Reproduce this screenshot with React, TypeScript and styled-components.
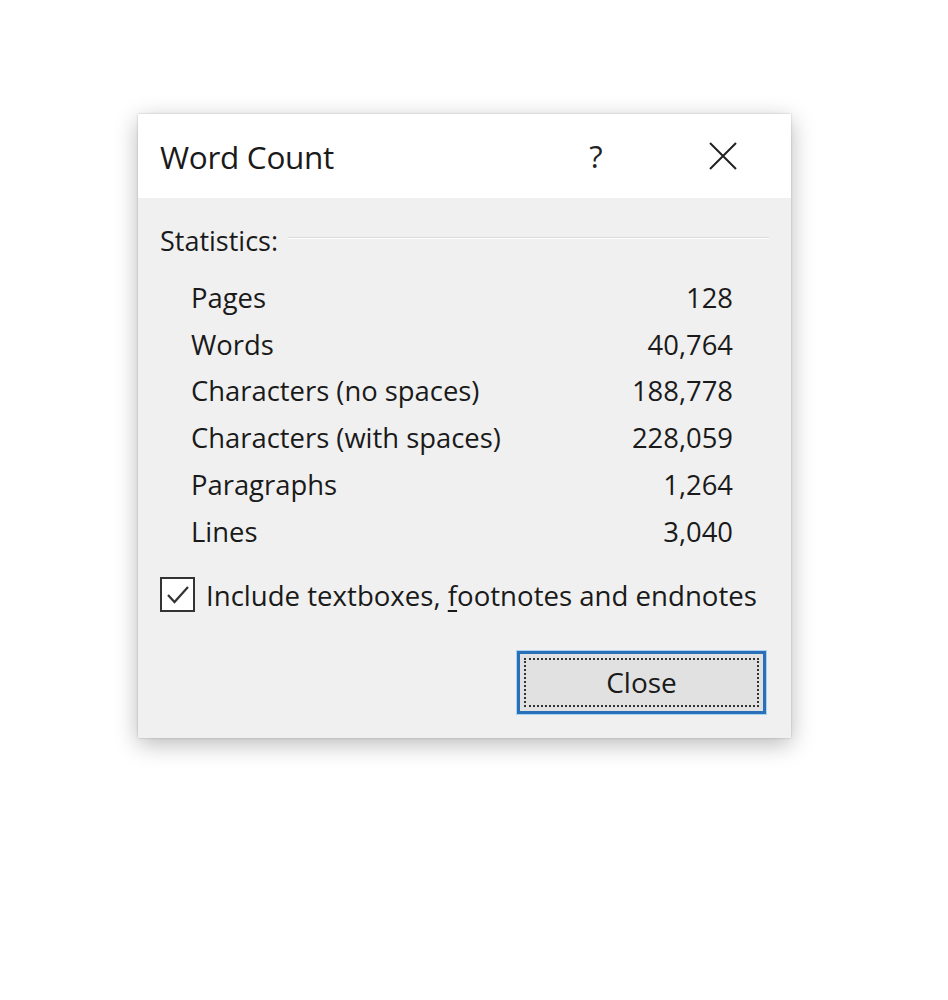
import React from "react";
import styled, { createGlobalStyle } from "styled-components";

const Global = createGlobalStyle`
  html, body { margin: 0; padding: 0; background: #ffffff; }
  body { font-family: "Open Sans", "Noto Sans", sans-serif; color: #1a1a1a; }
`;

const Page = styled.div`
  width: 948px;
  height: 1000px;
  padding: 114px 0 0 138px;
  box-sizing: border-box;
`;

const Dialog = styled.div`
  width: 653px;
  height: 624px;
  background: #f0f0f0;
  box-shadow: 0 6px 22px rgba(0, 0, 0, 0.28), 0 0 2px rgba(0, 0, 0, 0.2);
  display: flex;
  flex-direction: column;
`;

const TitleBar = styled.div`
  height: 84px;
  background: #ffffff;
  display: flex;
  align-items: center;
  padding-left: 22px;
`;

const Title = styled.div`
  flex: 1;
  font-size: 31.5px;
  color: #1a1a1a;
  letter-spacing: -0.3px;
`;

const TitleButton = styled.div<{ $gap?: number }>`
  width: 64px;
  height: 40px;
  display: flex;
  align-items: center;
  justify-content: center;
  font-size: 31px;
  color: #222;
  margin-right: ${(p) => p.$gap ?? 0}px;
`;

const Body = styled.div`
  padding: 24px 22px 0 22px;
  display: flex;
  flex-direction: column;
`;

const GroupHeader = styled.div`
  display: flex;
  align-items: center;
  gap: 10px;
  font-size: 27px;
  height: 36px;
`;

const GroupLine = styled.div`
  flex: 1;
  height: 1px;
  background: #dcdcdc;
  border-bottom: 1px solid #ffffff;
  margin-top: -4px;
`;

const Stats = styled.div`
  display: flex;
  flex-direction: column;
  padding: 16px 36px 0 31px;
`;

const StatRow = styled.div`
  display: flex;
  justify-content: space-between;
  align-items: center;
  height: 46.8px;
  font-size: 27.4px;
`;

const CheckRow = styled.div`
  display: flex;
  align-items: center;
  gap: 11px;
  margin-top: 21px;
  font-size: 27.6px;
`;

const Box = styled.div`
  width: 31px;
  height: 31px;
  border: 2px solid #333;
  background: #fff;
  display: flex;
  align-items: center;
  justify-content: center;
`;

const Underline = styled.span`
  text-decoration: underline;
  text-underline-offset: 4px;
`;

const Footer = styled.div`
  display: flex;
  justify-content: flex-end;
  padding: 37px 3px 0 0;
`;

const Button = styled.button`
  width: 249px;
  height: 63px;
  background: #e1e1e1;
  border: 3px solid #2a70b8;
  box-shadow: 0 0 0 1px #a9d2f3;
  padding: 4px;
  font-family: inherit;
  font-size: 28px;
  color: #1a1a1a;
  box-sizing: border-box;
  display: flex;
`;

const FocusRect = styled.span`
  flex: 1;
  border: 2px dotted #333;
  display: flex;
  align-items: center;
  justify-content: center;
`;

const stats: [string, string][] = [
  ["Pages", "128"],
  ["Words", "40,764"],
  ["Characters (no spaces)", "188,778"],
  ["Characters (with spaces)", "228,059"],
  ["Paragraphs", "1,264"],
  ["Lines", "3,040"],
];

export default function App() {
  return (
    <Page>
      <Global />
      <Dialog>
        <TitleBar>
          <Title>Word Count</Title>
          <TitleButton $gap={63}>?</TitleButton>
          <TitleButton $gap={36}>
            <svg width="30" height="30" viewBox="0 0 30 30">
              <path d="M2 2 L28 28 M28 2 L2 28" stroke="#222" strokeWidth="2" fill="none" />
            </svg>
          </TitleButton>
        </TitleBar>
        <Body>
          <GroupHeader>
            <span>Statistics:</span>
            <GroupLine />
          </GroupHeader>
          <Stats>
            {stats.map(([k, v]) => (
              <StatRow key={k}>
                <span>{k}</span>
                <span>{v}</span>
              </StatRow>
            ))}
          </Stats>
          <CheckRow>
            <Box>
              <svg width="24" height="20" viewBox="0 0 24 20">
                <path d="M2 10 L8.5 17 L22 2" stroke="#333" strokeWidth="2.2" fill="none" />
              </svg>
            </Box>
            <span>
              Include textboxes, <Underline>f</Underline>ootnotes and endnotes
            </span>
          </CheckRow>
          <Footer>
            <Button>
              <FocusRect>Close</FocusRect>
            </Button>
          </Footer>
        </Body>
      </Dialog>
    </Page>
  );
}
